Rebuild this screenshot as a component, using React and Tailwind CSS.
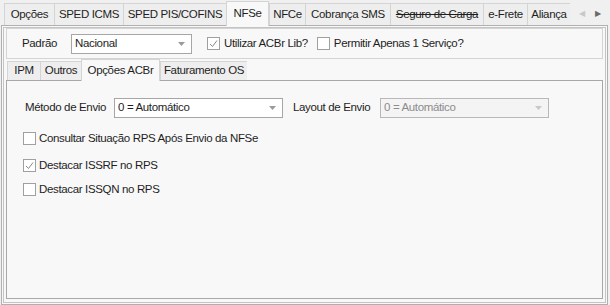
import React from 'react';

const font = { fontFamily: '"Liberation Sans", Arial, sans-serif', letterSpacing: '-0.35px' };

const topTabs = [
    { label: 'Opções', w: 50 },
    { label: 'SPED ICMS', w: 69 },
    { label: 'SPED PIS/COFINS', w: 103 },
    { label: 'NFSe', w: 43, active: true },
    { label: 'NFCe', w: 36 },
    { label: 'Cobrança SMS', w: 85 },
    { label: 'Seguro de Carga', w: 93, strike: true },
    { label: 'e-Frete', w: 44 },
    { label: 'Aliança', w: 43 },
];

const subTabs = [
    { label: 'IPM', w: 33 },
    { label: 'Outros', w: 41 },
    { label: 'Opções ACBr', w: 79, active: true },
    { label: 'Faturamento OS', w: 87 },
];

const Check = ({ checked, className = '' }) => (
    <span className={`w-[13px] h-[13px] border border-[#a0a0a0] bg-white flex items-center justify-center shrink-0 ${className}`}>
        {checked && (
            <svg width="9" height="9" viewBox="0 0 9 9">
                <path d="M1 5 L3.5 7.5 L8 1.5" fill="none" stroke="#8a8a8a" strokeWidth="1" />
            </svg>
        )}
    </span>
);

const Combo = ({ value, width, disabled }) => (
    <div
        className={`h-[20px] border flex items-center justify-between pl-[3px] pr-[6px] shrink-0 ${disabled ? 'border-[#b8b8b8] bg-[#f4f4f4] text-[#8c8c8c]' : 'border-[#a6a6a6] bg-white text-[#1e1e1e]'}`}
        style={{ width }}
    >
        <span>{value}</span>
        <svg width="7" height="4" viewBox="0 0 7 4">
            <path d="M0 0 L7 0 L3.5 4 Z" fill={disabled ? '#c8c8c8' : '#9a9a9a'} />
        </svg>
    </div>
);

const TabStrip = ({ tabs, height }) => (
    <div className="flex items-end">
        {tabs.map((t) => (
            <div
                key={t.label}
                className={`flex items-center justify-center shrink-0 whitespace-nowrap border-[#d4d4d4] ${t.active
                    ? 'bg-[#f8f8f8] border border-b-0 border-[#bdbdbd] -mb-px relative z-10'
                    : 'bg-[#eeeeee] border-t border-l'} ${t.strike ? 'line-through' : ''}`}
                style={{ width: t.w, height: t.active ? height + 3 : height }}
            >
                {t.label}
            </div>
        ))}
    </div>
);

export default function App() {
    return (
        <div className="w-[610px] h-[305px] bg-[#f0f0f0] text-[11.5px] text-[#1e1e1e] overflow-hidden whitespace-nowrap" style={font}>
            <div className="flex items-end pl-[4px] h-[25px]">
                <TabStrip tabs={topTabs} height={22} />
                <div className="flex items-center gap-[10px] pl-[9px] h-[22px] text-[8px] text-[#6a6a6a]">
                    <span className="text-[#c8c8c8]">◀</span>
                    <span>▶</span>
                </div>
            </div>
            <div className="ml-[1px] mr-[2px] h-[280px] border border-[#b0b0b0] p-[1px] bg-[#f8f8f8]">
                <div className="h-full border border-[#c4c4c4] pl-[2px] pr-[2px] pb-[3px] flex flex-col">
                    <div className="h-[31px] shrink-0 border border-[#d4d4d4] flex items-center text-[#1e1e1e]">
                        <span className="ml-[15px] w-[49px]">Padrão</span>
                        <Combo value="Nacional" width={121} />
                        <Check checked className="ml-[15px]" />
                        <span className="ml-[4px]">Utilizar ACBr Lib?</span>
                        <Check className="ml-[9px]" />
                        <span className="ml-[4px]">Permitir Apenas 1 Serviço?</span>
                    </div>
                    <div className="pl-[1px]">
                        <TabStrip tabs={subTabs} height={19} />
                    </div>
                    <div className="flex-1 border border-[#a8a8a8] flex flex-col">
                        <div className="flex items-center mt-[17px]">
                            <span className="ml-[18px] w-[89px]">Método de Envio</span>
                            <Combo value="0 = Automático" width={169} />
                            <span className="ml-[10px] w-[87px]">Layout de Envio</span>
                            <Combo value="0 = Automático" width={169} disabled />
                        </div>
                        <label className="flex items-center h-[13px] ml-[16px] mt-[14px] gap-[3px]">
                            <Check />
                            <span>Consultar Situação RPS Após Envio da NFSe</span>
                        </label>
                        <label className="flex items-center h-[13px] ml-[16px] mt-[14px] gap-[3px]">
                            <Check checked />
                            <span>Destacar ISSRF no RPS</span>
                        </label>
                        <label className="flex items-center h-[13px] ml-[16px] mt-[11px] gap-[3px]">
                            <Check />
                            <span>Destacar ISSQN no RPS</span>
                        </label>
                    </div>
                </div>
            </div>
        </div>
    );
}
